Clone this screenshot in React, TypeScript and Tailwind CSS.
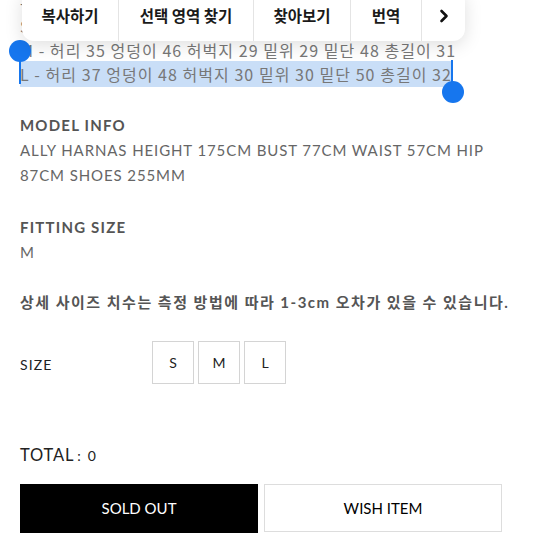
import { FC } from "react";

const lato = "font-['Lato','Noto_Sans_CJK_KR',sans-serif]";
const kr = "font-['Noto_Sans_CJK_KR','Noto_Sans',sans-serif]";

const menuItems = [
  { label: "복사하기", width: "w-[97px]" },
  { label: "선택 영역 찾기", width: "w-[135px]" },
  { label: "찾아보기", width: "w-[97px]" },
  { label: "번역", width: "w-[71px]" },
];

const SelectionMenu: FC = () => (
  <div className="absolute left-[22px] top-[-10px] z-20 flex h-[51px] items-center rounded-[12px] bg-white shadow-[0_4px_18px_rgba(0,0,0,0.13)]">
    {menuItems.map((item) => (
      <div
        key={item.label}
        className={`${item.width} flex h-full items-center justify-center border-r border-[#e4e4e4] pt-[1px] ${kr} text-[15.5px] font-bold text-[#1a1a1a]`}
      >
        {item.label}
      </div>
    ))}
    <div className="flex h-full w-[43px] items-center justify-center pt-[1px]">
      <svg width="10" height="14" viewBox="0 0 10 14">
        <path d="M2.5 2 L7.5 7 L2.5 12" fill="none" stroke="#111" strokeWidth="2.6" strokeLinecap="round" strokeLinejoin="round" />
      </svg>
    </div>
  </div>
);

const SizeButton: FC<{ label: string }> = ({ label }) => (
  <div className={`flex h-[43px] w-[42px] items-center justify-center border border-[#d4d4d4] bg-white ${lato} text-[14px] text-[#222]`}>
    {label}
  </div>
);

export default function App() {
  return (
    <div className="relative h-[554px] w-[554px] overflow-hidden bg-white">
      <SelectionMenu />

      <div className={`relative mt-[-10px] pl-[20px] ${kr} text-[16px] leading-[24px] tracking-[0.065em] text-[#777]`}>
        <div>- 사이즈 (cm)</div>
        <div>S - 허리 33 엉덩이 44 허벅지 28 밑위 28 밑단 46 총길이 30</div>
        <div>M - 허리 35 엉덩이 46 허벅지 29 밑위 29 밑단 48 총길이 31</div>
        <div>
          <span className="bg-[#c9def7] py-[1px]">L - 허리 37 엉덩이 48 허벅지 30 밑위 30 밑단 50 총길이 32</span>
        </div>

        {/* selection handles */}
        <div className="absolute left-[19px] top-[60px] h-[34px] w-[2px] bg-[#1676ee]" />
        <div className="absolute left-[9px] top-[50px] h-[22px] w-[22px] rounded-full bg-[#1676ee]" />
        <div className="absolute left-[451px] top-[70px] h-[26px] w-[2px] bg-[#1676ee]" />
        <div className="absolute left-[442px] top-[91px] h-[22px] w-[22px] rounded-full bg-[#1676ee]" />
      </div>

      <div className="px-[20px]">
        <div className={`mt-[27px] ${lato} text-[15px] font-bold leading-[25px] tracking-[0.08em] text-[#555]`}>MODEL INFO</div>
        <div className={`max-w-[482px] ${lato} text-[15px] leading-[25px] tracking-[0.06em] text-[#666]`}>
          ALLY HARNAS HEIGHT 175CM BUST 77CM WAIST 57CM HIP 87CM SHOES 255MM
        </div>

        <div className={`mt-[27px] ${lato} text-[15px] font-bold leading-[25px] tracking-[0.08em] text-[#555]`}>FITTING SIZE</div>
        <div className={`${lato} text-[15px] leading-[25px] text-[#666]`}>M</div>

        <div className={`mt-[25px] ${lato} text-[15px] font-bold leading-[25px] tracking-[0.1em] text-[#555]`}>
          상세 사이즈 치수는 측정 방법에 따라 1-3cm 오차가 있을 수 있습니다.
        </div>

        <div className="mt-[26px] flex items-center">
          <div className={`w-[132px] pt-[4px] ${lato} text-[14px] tracking-[0.08em] text-[#222]`}>SIZE</div>
          <div className="flex gap-[4px]">
            <SizeButton label="S" />
            <SizeButton label="M" />
            <SizeButton label="L" />
          </div>
        </div>

        <div className={`mt-[59px] flex items-baseline ${lato} text-[#222]`}>
          <span className="text-[16.5px] tracking-[0.05em]">TOTAL</span>
          <span className="ml-[3px] text-[14px] tracking-[0.12em]">: 0</span>
        </div>

        <div className="mt-[16px] flex gap-[6px]">
          <div className={`flex h-[49px] w-[238px] items-center justify-center bg-black ${lato} text-[15px] text-white`}>SOLD OUT</div>
          <div className={`flex h-[48px] w-[238px] items-center justify-center border border-[#ddd] bg-white ${lato} text-[15px] text-black`}>WISH ITEM</div>
        </div>
      </div>
    </div>
  );
}
